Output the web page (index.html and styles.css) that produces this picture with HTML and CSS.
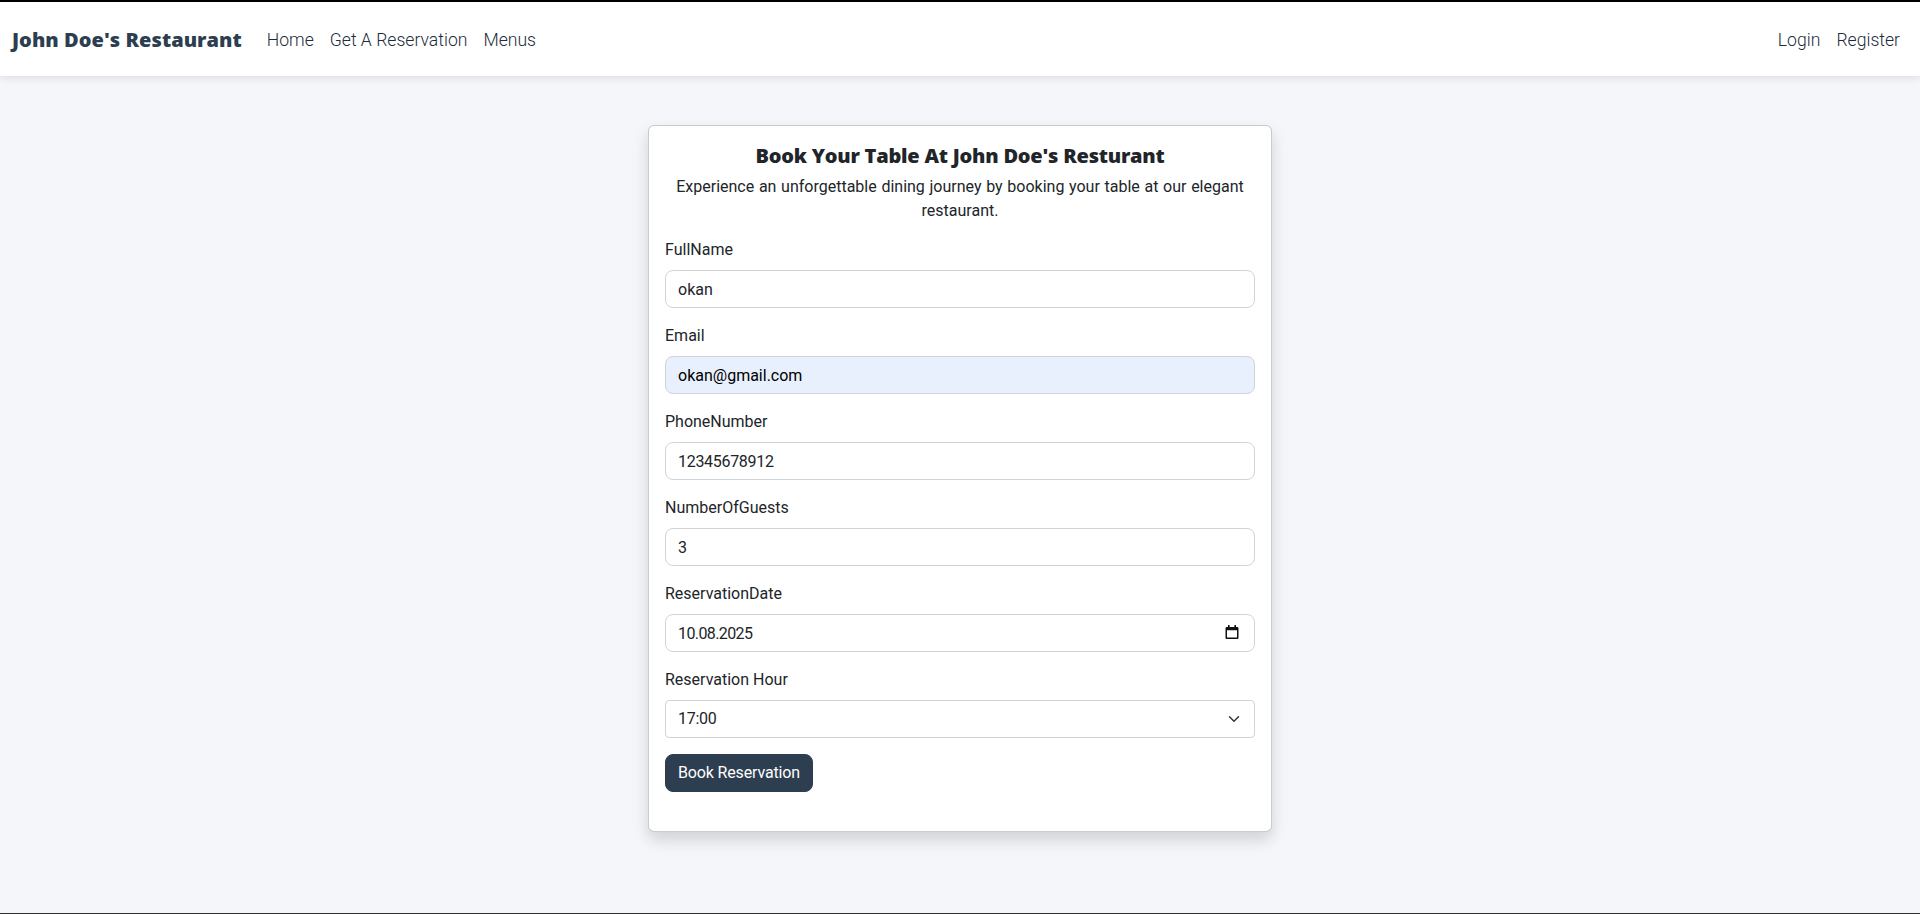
FILE: index.html
```html
<!DOCTYPE html>
<html lang="en">
<head>
    <meta charset="UTF-8">
    <meta name="viewport" content="width=device-width, initial-scale=1.0">
    <title>Book Your Table</title>
    <link rel="stylesheet" href="styles.css">
</head>
<body>
    <nav class="navbar">
        <a class="brand" href="#">John Doe's Restaurant</a>
        <div class="nav-links">
            <a href="#">Home</a>
            <a href="#">Get A Reservation</a>
            <a href="#">Menus</a>
        </div>
        <div class="nav-links nav-right">
            <a href="#">Login</a>
            <a href="#">Register</a>
        </div>
    </nav>

    <main class="card">
        <h1>Book Your Table At John Doe's Resturant</h1>
        <p class="lead">Experience an unforgettable dining journey by booking your table at our elegant restaurant.</p>
        <form>
            <div class="field">
                <label for="fullName">FullName</label>
                <input type="text" id="fullName" value="okan">
            </div>
            <div class="field">
                <label for="email">Email</label>
                <input type="text" id="email" class="autofilled" value="okan@gmail.com">
            </div>
            <div class="field">
                <label for="phone">PhoneNumber</label>
                <input type="text" id="phone" class="digits" value="12345678912">
            </div>
            <div class="field">
                <label for="guests">NumberOfGuests</label>
                <input type="text" id="guests" value="3">
            </div>
            <div class="field">
                <label for="date">ReservationDate</label>
                <div class="date-wrap">
                    <input type="text" id="date" class="digits date" value="10.08.2025">
                    <svg class="date-icon" width="14" height="14" viewBox="0 0 14 14">
                        <path d="M3 0h1.6v2h4.8V0H11v2h1.2c.7 0 1.3.6 1.3 1.3v9.400c0 .7-.6 1.300-1.300 1.300H1.800C1.100 14 .5 13.400 .5 12.700V3.300C.5 2.600 1.100 2 1.800 2H3z M2 5.200v7.300h10V5.200z" fill="#111" fill-rule="evenodd"/>
                    </svg>
                </div>
            </div>
            <div class="field">
                <label for="hour">Reservation Hour</label>
                <select id="hour" class="digits">
                    <option>17:00</option>
                    <option>18:00</option>
                    <option>19:00</option>
                </select>
            </div>
            <button type="submit">Book Reservation</button>
        </form>
    </main>
</body>
</html>
```

FILE: styles.css
```css
* {
    box-sizing: border-box;
}
body {
    margin: 0;
    height: 914px;
    overflow: hidden;
    font-family: 'Roboto', 'Liberation Sans', sans-serif;
    font-size: 16px;
    line-height: 24px;
    color: #212529;
    background: #f4f6f9;
    border-top: 2px solid #000;
    border-bottom: 1px solid #333;
}
.navbar {
    display: flex;
    align-items: center;
    height: 74px;
    padding: 2px 20px 0 12px;
    background: #fff;
    box-shadow: 0 2px 8px rgba(0, 0, 0, 0.1);
}
.brand {
    margin-right: 25px;
    font-family: 'Open Sans', sans-serif;
    font-size: 20px;
    font-weight: 800;
    letter-spacing: 0.05px;
    color: #2c3e50;
    text-decoration: none;
}
.nav-links {
    display: flex;
    gap: 16px;
}
.nav-links a {
    font-size: 17.6px;
    font-weight: 300;
    color: #1c2c3c;
    text-decoration: none;
}
.nav-right {
    margin-left: auto;
}
.card {
    width: 624px;
    height: 707px;
    margin: 49px auto 0;
    padding: 16px;
    background: #fff;
    border: 1px solid rgba(0, 0, 0, 0.2);
    border-radius: 6px;
    box-shadow: 0 8px 16px rgba(0, 0, 0, 0.15);
}
h1 {
    margin: 0 0 7px;
    padding-top: 2px;
    font-family: 'Open Sans', sans-serif;
    font-size: 20px;
    line-height: 24px;
    font-weight: 800;
    letter-spacing: -0.22px;
    text-align: center;
}
.lead {
    margin: 0 0 15px;
    text-align: center;
    word-spacing: 0.7px;
}
.field {
    margin-bottom: 16px;
}
label {
    display: block;
    margin-bottom: 8px;
}
input, select {
    display: block;
    width: 100%;
    height: 38px;
    padding: 6px 12px;
    font: inherit;
    color: #212529;
    background: #fff;
    border: 1px solid #ced4da;
    border-radius: 8px;
    outline: none;
}
.digits {
    letter-spacing: -0.3px;
}
.date {
    letter-spacing: -0.6px;
}
.autofilled {
    color: #000;
    background: #e8f0fe;
}
select {
    appearance: none;
    border-radius: 4px;
    background-image: url("data:image/svg+xml,%3csvg xmlns='http://www.w3.org/2000/svg' viewBox='0 0 16 16'%3e%3cpath fill='none' stroke='%23343a40' stroke-linecap='round' stroke-linejoin='round' stroke-width='2' d='m2 5 6 6 6-6'/%3e%3c/svg%3e");
    background-repeat: no-repeat;
    background-position: right 12px center;
    background-size: 16px 12px;
}
.date-wrap {
    position: relative;
}
.date-icon {
    position: absolute;
    top: 11px;
    right: 16px;
}
button {
    display: block;
    height: 38px;
    padding: 6px 12px;
    font: inherit;
    letter-spacing: -0.15px;
    color: #fff;
    background: #2c3e50;
    border: 1px solid #2c3e50;
    border-radius: 8px;
    cursor: pointer;
}
```
